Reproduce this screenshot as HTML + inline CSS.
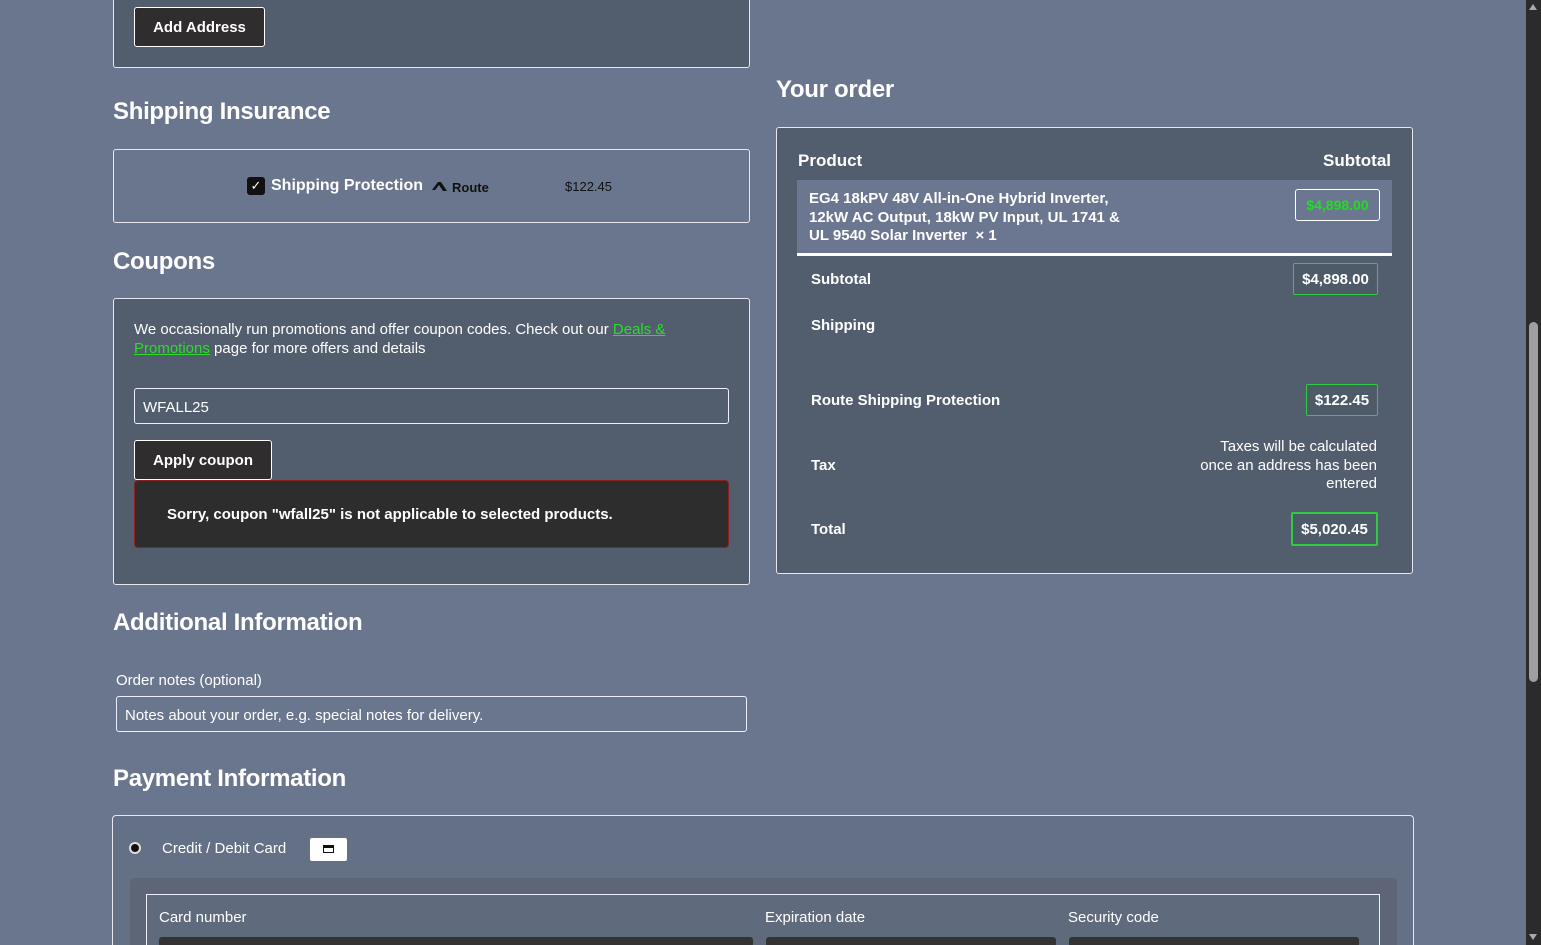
<!DOCTYPE html>
<html><head><meta charset="utf-8"><style>
*{box-sizing:border-box;margin:0;padding:0}
html,body{width:1541px;height:945px;overflow:hidden}
body{background:#6a768d;font-family:"Liberation Sans",sans-serif;color:#fff;position:relative}
.a{position:absolute}
.box{position:absolute;background:#525d6e;border:1px solid #e6e8ee;border-radius:3px}
h2{position:absolute;font-size:24px;font-weight:bold;color:#fff;letter-spacing:-0.3px}
.btn{position:absolute;background:#2f2d2d;border:1px solid #fff;border-radius:3px;font-weight:bold;font-size:15px;display:flex;align-items:center;justify-content:center}
.t{font-size:15px}
.b{font-weight:bold;font-size:15px}
.pr{position:absolute;border:1px solid #2ecc40;border-radius:2px;font-weight:bold;font-size:15px;display:flex;align-items:center;justify-content:center;background:#4d5a68}
</style></head><body>

<div class="box" style="left:113px;top:-5px;width:637px;height:73px"></div>
<div class="btn" style="left:134px;top:7px;width:131px;height:40px">Add Address</div>

<h2 style="left:113px;top:98px">Shipping Insurance</h2>
<div class="box" style="left:113px;top:149px;width:637px;height:74px;background:#6a768d"></div>
<div class="a" style="left:247px;top:177px;width:18px;height:18px;background:#111;border-radius:3px;color:#fff;font-size:13px;text-align:center;line-height:18px">✓</div>
<div class="a" style="left:271px;top:177px;font-size:16px;font-weight:bold;color:#fff">Shipping Protection</div>
<svg class="a" style="left:431px;top:180px" width="17" height="12" viewBox="0 0 17 12"><path d="M1 10 L7 2 L10 2 L16 11 L12 11 L8 5 L4 10Z" fill="#111"/></svg>
<div class="a" style="left:452px;top:180px;font-size:13px;font-weight:bold;color:#111">Route</div>
<div class="a" style="left:565px;top:179px;font-size:13px;color:#111">$122.45</div>

<h2 style="left:113px;top:248px">Coupons</h2>
<div class="box" style="left:113px;top:298px;width:637px;height:287px"></div>
<div class="a t" style="left:134px;top:320px;width:600px;line-height:19px">We occasionally run promotions and offer coupon codes. Check out our <span style="color:#2bdc2b;text-decoration:underline">Deals &amp; Promotions</span> page for more offers and details</div>
<div class="a" style="left:134px;top:388px;width:595px;height:36px;border:1px solid #eef;border-radius:3px;padding:10px 8px;font-size:15px">WFALL25</div>
<div class="btn" style="left:134px;top:440px;width:138px;height:40px">Apply coupon</div>
<div class="a" style="left:134px;top:480px;width:595px;height:68px;background:#2d2d2d;border:1px solid #8a2020;border-radius:4px;font-weight:bold;font-size:15px;padding:25px 32px">Sorry, coupon "wfall25" is not applicable to selected products.</div>

<h2 style="left:113px;top:609px">Additional Information</h2>
<div class="a t" style="left:116px;top:672px">Order notes (optional)</div>
<div class="a" style="left:116px;top:696px;width:631px;height:36px;border:1px solid #eef;border-radius:3px;padding:10px 8px;font-size:15px">Notes about your order, e.g. special notes for delivery.</div>

<h2 style="left:113px;top:765px">Payment Information</h2>
<div class="a" style="left:112px;top:815px;width:1302px;height:140px;border:1px solid #e6e8ee;border-radius:4px;background:#647085"></div>
<div class="a" style="left:129px;top:842px;width:12px;height:12px;border-radius:50%;background:#111;border:2px solid #ddd"></div>
<div class="a t" style="left:162px;top:840px">Credit / Debit Card</div>
<div class="a" style="left:310px;top:838px;width:37px;height:23px;background:#fff;border-radius:2px"><div class="a" style="left:13px;top:7px;width:11px;height:8px;border:1.5px solid #111;border-top-width:3px"></div></div>
<div class="a" style="left:130px;top:878px;width:1267px;height:80px;background:#5d6577;border-radius:4px"></div>
<div class="a" style="left:146px;top:894px;width:1234px;height:60px;border:1px solid #eef;background:#5f6a7c"></div>
<div class="a t" style="left:159px;top:909px">Card number</div>
<div class="a t" style="left:765px;top:909px">Expiration date</div>
<div class="a t" style="left:1068px;top:909px">Security code</div>
<div class="a" style="left:159px;top:937px;width:594px;height:10px;background:#333;border-radius:3px"></div>
<div class="a" style="left:766px;top:937px;width:290px;height:10px;background:#333;border-radius:3px"></div>
<div class="a" style="left:1069px;top:937px;width:290px;height:10px;background:#333;border-radius:3px"></div>

<h2 style="left:776px;top:76px">Your order</h2>
<div class="box" style="left:776px;top:127px;width:637px;height:447px"></div>
<div class="a b" style="left:798px;top:151px;font-size:17px">Product</div>
<div class="a b" style="right:150px;top:151px;font-size:17px">Subtotal</div>
<div class="a" style="left:797px;top:180px;width:595px;height:73px;background:#6b7690"></div>
<div class="a" style="left:797px;top:253px;width:595px;height:3px;background:#fff"></div>
<div class="a b" style="left:809px;top:190px;line-height:18.5px;font-size:15px">EG4 18kPV 48V All-in-One Hybrid Inverter,<br>12kW AC Output, 18kW PV Input, UL 1741 &amp;<br>UL 9540 Solar Inverter &nbsp;× 1</div>
<div class="a" style="left:1295px;top:189px;width:85px;height:32px;border:1px solid #fff;border-radius:3px;color:#22dd22;font-weight:bold;font-size:14px;display:flex;align-items:center;justify-content:center">$4,898.00</div>
<div class="a b" style="left:811px;top:271px">Subtotal</div>
<div class="pr" style="left:1293px;top:263px;width:85px;height:32px">$4,898.00</div>
<div class="a b" style="left:811px;top:317px">Shipping</div>
<div class="a b" style="left:811px;top:392px">Route Shipping Protection</div>
<div class="pr" style="left:1306px;top:384px;width:72px;height:32px">$122.45</div>
<div class="a b" style="left:811px;top:457px">Tax</div>
<div class="a t" style="right:164px;top:438px;text-align:right;line-height:18.5px;width:240px">Taxes will be calculated<br>once an address has been<br>entered</div>
<div class="a b" style="left:811px;top:521px">Total</div>
<div class="pr" style="left:1291px;top:512px;width:87px;height:34px;border:2px solid #2ecc40">$5,020.45</div>

<div class="a" style="left:1526px;top:0;width:15px;height:945px;background:#2b2b2b"></div>
<div class="a" style="left:1529px;top:322px;width:9px;height:360px;background:#9f9f9f;border-radius:5px"></div>
<div class="a" style="left:1529px;top:4px;width:0;height:0;border-left:4px solid transparent;border-right:4px solid transparent;border-bottom:6px solid #aaa"></div>
<div class="a" style="left:1529px;top:934px;width:0;height:0;border-left:4px solid transparent;border-right:4px solid transparent;border-top:6px solid #aaa"></div>
</body></html>
